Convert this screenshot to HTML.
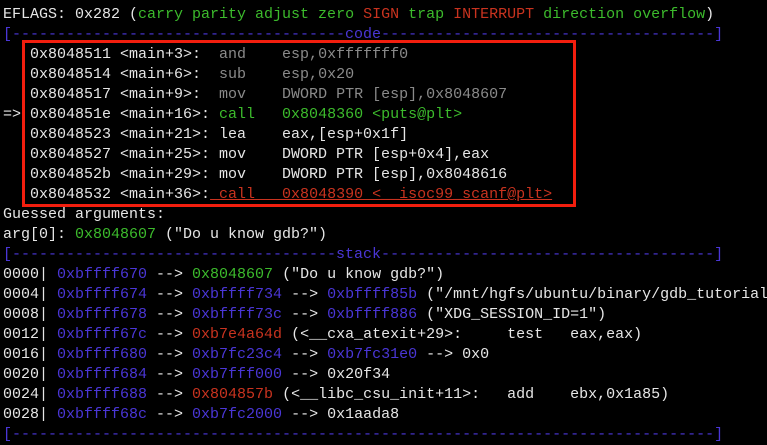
<!DOCTYPE html>
<html><head><meta charset="utf-8"><style>
html,body{margin:0;padding:0;background:#000;width:767px;height:443px;overflow:hidden}
pre{position:absolute;left:3px;top:5px;margin:0;font-family:"Liberation Mono",monospace;font-size:15px;line-height:20px;color:#e6e6e6;white-space:pre}
.g{color:#3cbb2c}.r{color:#c9331f}.b{color:#4a36d6}.d{color:#8a8a8a}.u{text-decoration:underline}
.box{position:absolute;left:22px;top:40px;width:548px;height:161px;border:3px solid #f21e0e}
</style></head><body>
<pre>EFLAGS: 0x282 (<span class="g">carry parity adjust zero </span><span class="r">SIGN</span><span class="g"> trap </span><span class="r">INTERRUPT</span><span class="g"> direction overflow</span>)
<span class="b">[-------------------------------------code-------------------------------------]</span>
   0x8048511 &lt;main+3&gt;:  <span class="d">and    esp,0xfffffff0</span>
   0x8048514 &lt;main+6&gt;:  <span class="d">sub    esp,0x20</span>
   0x8048517 &lt;main+9&gt;:  <span class="d">mov    DWORD PTR [esp],0x8048607</span>
=&gt; 0x804851e &lt;main+16&gt;: <span class="g">call   0x8048360 &lt;puts@plt&gt;</span>
   0x8048523 &lt;main+21&gt;: lea    eax,[esp+0x1f]
   0x8048527 &lt;main+25&gt;: mov    DWORD PTR [esp+0x4],eax
   0x804852b &lt;main+29&gt;: mov    DWORD PTR [esp],0x8048616
   0x8048532 &lt;main+36&gt;:<span class="r u"> call   0x8048390 &lt;__isoc99_scanf@plt&gt;</span>
Guessed arguments:
arg[0]: <span class="g">0x8048607</span> ("Do u know gdb?")
<span class="b">[------------------------------------stack-------------------------------------]</span>
0000| <span class="b">0xbffff670</span> --&gt; <span class="g">0x8048607</span> ("Do u know gdb?")
0004| <span class="b">0xbffff674</span> --&gt; <span class="b">0xbffff734</span> --&gt; <span class="b">0xbffff85b</span> ("/mnt/hgfs/ubuntu/binary/gdb_tutorial
0008| <span class="b">0xbffff678</span> --&gt; <span class="b">0xbffff73c</span> --&gt; <span class="b">0xbffff886</span> ("XDG_SESSION_ID=1")
0012| <span class="b">0xbffff67c</span> --&gt; <span class="r">0xb7e4a64d</span> (&lt;__cxa_atexit+29&gt;:	test   eax,eax)
0016| <span class="b">0xbffff680</span> --&gt; <span class="b">0xb7fc23c4</span> --&gt; <span class="b">0xb7fc31e0</span> --&gt; 0x0
0020| <span class="b">0xbffff684</span> --&gt; <span class="b">0xb7fff000</span> --&gt; 0x20f34
0024| <span class="b">0xbffff688</span> --&gt; <span class="r">0x804857b</span> (&lt;__libc_csu_init+11&gt;:	add    ebx,0x1a85)
0028| <span class="b">0xbffff68c</span> --&gt; <span class="b">0xb7fc2000</span> --&gt; 0x1aada8
<span class="b">[------------------------------------------------------------------------------]</span></pre>
<div class="box"></div>
</body></html>
